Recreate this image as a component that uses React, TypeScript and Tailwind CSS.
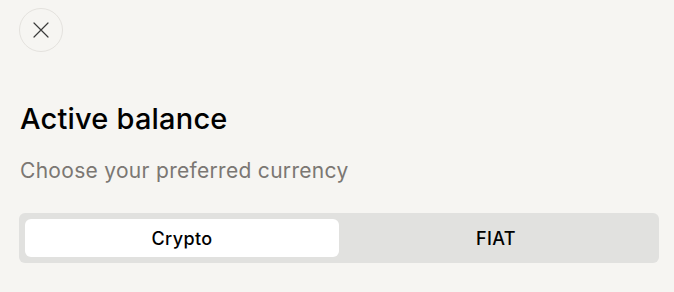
import { useState } from "react";

export default function App() {
  const [mode, setMode] = useState<"crypto" | "fiat">("crypto");

  return (
    <div className="w-[674px] h-[292px] bg-[#f6f5f2] px-[19px] pt-[8px] font-['Inter',sans-serif] overflow-hidden">
      {/* Close button */}
      <button className="w-[44px] h-[44px] rounded-full border border-[#e4e2de] flex items-center justify-center text-[#3a3a3a]">
        <svg width="16" height="16" viewBox="0 0 16 16" fill="none" stroke="currentColor" strokeWidth="1.2" strokeLinecap="round">
          <path d="M1 1L15 15M15 1L1 15" />
        </svg>
      </button>

      <h1 className="mt-[49px] text-[29px] leading-[35px] font-medium text-black tracking-[0.2px] pl-[1px]">
        Active balance
      </h1>
      <p className="mt-[22px] text-[21px] leading-[26px] text-[#7b7773] tracking-[0.3px] pl-[1px]">
        Choose your preferred currency
      </p>

      {/* Segmented control */}
      <div className="mt-[29px] h-[50px] w-[640px] rounded-[6px] bg-[#e1e1df] p-[6px] flex">
        <button
          onClick={() => setMode("crypto")}
          className={`flex-1 rounded-[6px] text-[18px] font-medium tracking-[0.4px] text-black ${mode === "crypto" ? "bg-white" : ""}`}
        >
          Crypto
        </button>
        <button
          onClick={() => setMode("fiat")}
          className={`flex-1 rounded-[6px] text-[18px] font-medium tracking-[0.4px] text-black ${mode === "fiat" ? "bg-white" : ""}`}
        >
          FIAT
        </button>
      </div>
    </div>
  );
}
